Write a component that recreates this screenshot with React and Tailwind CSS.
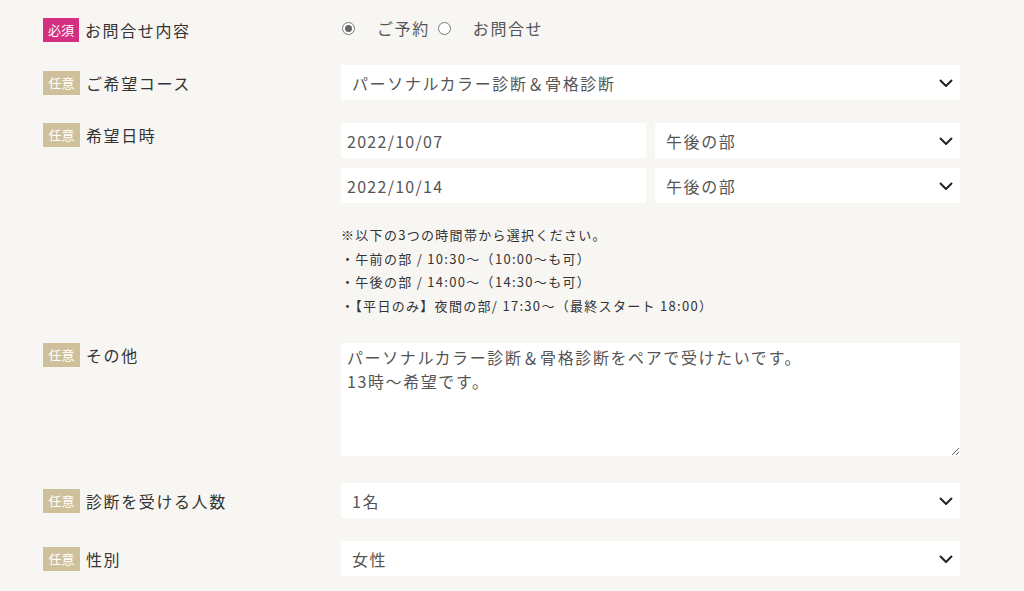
import React from "react";

const FONT = { fontFamily: '"Noto Sans CJK JP", "Noto Sans", sans-serif' };

function Badge({ required }) {
  return required ? (
    <span className="inline-flex h-[24px] w-[36px] shrink-0 items-center justify-center bg-[#d42f80] text-[13px] tracking-normal text-white">
      必須
    </span>
  ) : (
    <span className="inline-flex h-[24px] w-[37px] shrink-0 items-center justify-center bg-[#cfc09c] text-[13px] tracking-normal text-white">
      任意
    </span>
  );
}

function Label({ required, children }) {
  return (
    <div className="flex items-center gap-[6px] text-[16px] tracking-[0.1em] text-[#333]">
      <Badge required={required} />
      <span className="leading-[24px]">{children}</span>
    </div>
  );
}

function Chevron() {
  return (
    <svg width="14" height="8" viewBox="0 0 14 8" className="shrink-0">
      <path d="M1 1l6 6 6-6" fill="none" stroke="#222" strokeWidth="2" />
    </svg>
  );
}

function Select({ value, className = "" }) {
  return (
    <div className={`flex h-[35px] items-center justify-between bg-white pl-[11px] pr-[7px] text-[16px] tracking-[0.1em] text-[#555] ${className}`}>
      <span>{value}</span>
      <Chevron />
    </div>
  );
}

function Field({ value }) {
  return (
    <div className="flex h-[35px] flex-1 items-center bg-white pl-[6px] text-[16px] tracking-[0.08em] text-[#555]">
      {value}
    </div>
  );
}

function Radio({ checked, label }) {
  return (
    <span className="inline-flex items-center">
      <span className="grid h-[13px] w-[13px] place-items-center rounded-full border border-[#777] bg-white">
        {checked && <span className="h-[7px] w-[7px] rounded-full bg-[#666]" />}
      </span>
      <span className="ml-[22px] text-[16px] tracking-[0.1em] text-[#555]">{label}</span>
    </span>
  );
}

export default function App() {
  return (
    <div className="min-h-[591px] w-[1024px] bg-[#f8f6f3] pl-[43px] pt-[18px]" style={FONT}>
      <div className="grid grid-cols-[298px_619px] items-start">
        <Label required>お問合せ内容</Label>
        <div className="flex h-[24px] items-center gap-[8px] pb-[4px] pl-[1px]">
          <Radio checked label="ご予約" />
          <Radio label="お問合せ" />
        </div>
      </div>

      <div className="mt-[23px] grid grid-cols-[298px_619px] items-center">
        <Label>ご希望コース</Label>
        <Select value="パーソナルカラー診断＆骨格診断" />
      </div>

      <div className="mt-[23px] grid grid-cols-[298px_619px] items-start">
        <Label>希望日時</Label>
        <div className="flex flex-col">
          <div className="flex gap-[9px]">
            <Field value="2022/10/07" />
            <Select value="午後の部" className="w-[305px]" />
          </div>
          <div className="mt-[10px] flex gap-[9px]">
            <Field value="2022/10/14" />
            <Select value="午後の部" className="w-[305px]" />
          </div>
          <div className="mt-[20px] text-[13px] leading-[23.5px] tracking-[0.1em] text-[#333]">
            <p>※以下の3つの時間帯から選択ください。</p>
            <p>・午前の部 / 10:30～（10:00～も可）</p>
            <p>・午後の部 / 14:00～（14:30～も可）</p>
            <p>・【平日のみ】夜間の部/ 17:30～（最終スタート 18:00）</p>
          </div>
        </div>
      </div>

      <div className="mt-[26px] grid grid-cols-[298px_619px] items-start">
        <Label>その他</Label>
        <textarea
          readOnly
          className="h-[113px] w-full bg-white px-[6px] pt-[2px] text-[16px] leading-[24px] tracking-[0.1em] text-[#555] outline-none"
          style={FONT}
          defaultValue={"パーソナルカラー診断＆骨格診断をペアで受けたいです。\n13時～希望です。"}
        />
      </div>

      <div className="mt-[27px] grid grid-cols-[298px_619px] items-center">
        <Label>診断を受ける人数</Label>
        <Select value="1名" />
      </div>

      <div className="mt-[23px] grid grid-cols-[298px_619px] items-center">
        <Label>性別</Label>
        <Select value="女性" />
      </div>
    </div>
  );
}
